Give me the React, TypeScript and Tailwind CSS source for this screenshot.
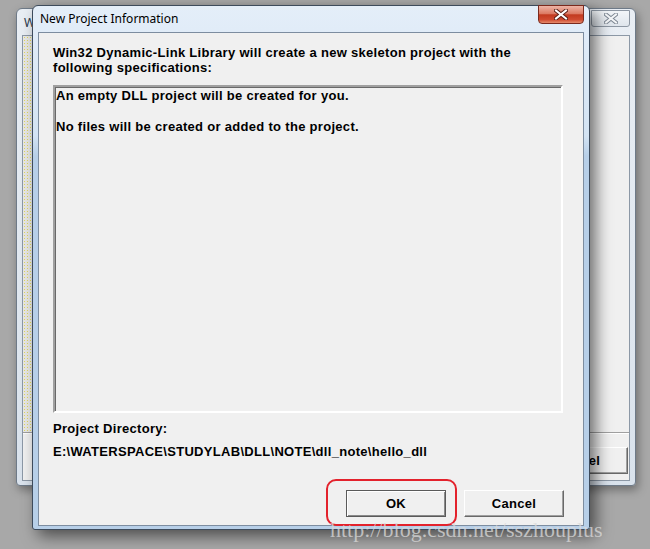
import React from "react";

const ui = "font-['Liberation_Sans','Arial',sans-serif]";

function CloseGlyph({ fill, stroke }: { fill: string; stroke: string }) {
  return (
    <svg width="14" height="11" viewBox="0 0 14 11">
      <path
        d="M2 1.5 L12 9.5 M12 1.5 L2 9.5"
        stroke={stroke}
        strokeWidth="4"
        strokeLinecap="square"
        fill="none"
      />
      <path
        d="M2 1.5 L12 9.5 M12 1.5 L2 9.5"
        stroke={fill}
        strokeWidth="2"
        strokeLinecap="square"
        fill="none"
      />
    </svg>
  );
}

function BackWindow() {
  return (
    <div className="absolute left-[16px] top-[8px] flex h-[478px] w-[620px] flex-col rounded-t-[6px] rounded-b-[4px] border border-[#6e7a88] bg-[linear-gradient(to_bottom,#e9eef4,#d9e2ec)] px-[5px] pb-[4px] shadow-[2px_4px_10px_rgba(0,0,0,0.35)]">
      <div className="flex h-[26px] items-start justify-between">
        <span className="pl-[2px] pt-[5px] font-['Noto_Sans',sans-serif] text-[12px] text-[#2a3a4c]">W</span>
        <div className="mt-[1px] flex h-[17px] w-[39px] items-center justify-center rounded-b-[3px] border border-[#8d97a3] bg-[linear-gradient(to_bottom,#f2f5f8,#dfe5ec)]">
          <CloseGlyph fill="#f4f6f8" stroke="#7d8793" />
        </div>
      </div>
      <div className="flex flex-1 flex-col border border-[#8c98a6] bg-[#f0f0f0]">
        <div className="flex flex-1">
          <div className="w-[9px] bg-[#e8e8e6] bg-[radial-gradient(#e0d860_0.6px,transparent_0.7px)] bg-[length:3px_3px]" />
        </div>
        <div className="border-t border-b border-t-[#a0a0a0] border-b-white" />
        <div className="flex justify-end pt-[13px] pb-[6px] pr-[1px]">
          <div
            className={`${ui} flex h-[27px] w-[100px] items-center justify-center border border-t-white border-l-white border-r-[#696969] border-b-[#696969] text-[13px] font-bold tracking-[0.3px] text-black shadow-[inset_-1px_-1px_0_#a0a0a0]`}
          >
            Cancel
          </div>
        </div>
      </div>
    </div>
  );
}

function FrontDialog() {
  return (
    <div className="absolute left-[32px] top-[5px] flex h-[525px] w-[558px] flex-col rounded-t-[6px] rounded-b-[3px] border border-[#3d4b5c] bg-[linear-gradient(to_bottom,#e4eef9_0px,#d3e3f3_130px,#b7cfe8_150px,#b7cfe8_100%)] px-[5px] pb-[3px] shadow-[6px_6px_16px_rgba(0,0,0,0.55)]">
      <div className="flex h-[26px] items-start justify-between">
        <span className="pl-[2px] pt-[4px] font-['Noto_Sans',sans-serif] text-[12px] text-black">
          New Project Information
        </span>
        <div className="-mt-[1px] flex h-[19px] w-[46px] items-center justify-center rounded-b-[4px] border border-[#7a2a1e] bg-[linear-gradient(to_bottom,#edb4a6_0%,#dc7a63_45%,#c23a20_52%,#cf4a30_80%,#e68b6c_100%)]">
          <CloseGlyph fill="#ffffff" stroke="#5a2016" />
        </div>
      </div>
      <div
        className={`${ui} flex flex-1 flex-col border border-[#7d8da0] bg-[#f0f0f0] pl-[14px] pr-[19px] pt-[12px] text-[13px] font-bold leading-[15px] tracking-[0.3px] text-black`}
      >
        <p>
          Win32 Dynamic-Link Library will create a new skeleton project with the
          <br />
          following specifications:
        </p>
        <div className="mt-[10px] h-[328px] w-[510px] border-2 border-t-[#a0a0a0] border-l-[#a0a0a0] border-r-white border-b-white bg-[#f0f0f0] pl-[1px] pt-[1px] shadow-[inset_1px_1px_0_#696969]">
          <p>An empty DLL project will be created for you.</p>
          <p className="mt-[16px]">No files will be created or added to the project.</p>
        </div>
        <p className="mt-[8px]">Project Directory:</p>
        <p className="mt-[8px]">{"E:\\WATERSPACE\\STUDYLAB\\DLL\\NOTE\\dll_note\\hello_dll"}</p>
        <div className="mt-auto flex justify-end gap-[18px] pb-[8px]">
          <div className="flex h-[27px] w-[100px] items-center justify-center border border-[#5a5a5a] shadow-[inset_1px_1px_0_#ffffff,inset_-1px_-1px_0_#8a8a8a]">
            OK
          </div>
          <div className="flex h-[27px] w-[100px] items-center justify-center border border-t-white border-l-white border-r-[#696969] border-b-[#696969] shadow-[inset_-1px_-1px_0_#a0a0a0]">
            Cancel
          </div>
        </div>
      </div>
    </div>
  );
}

export default function App() {
  return (
    <div className="relative h-[549px] w-[650px] overflow-hidden bg-[#a8a8a8]">
      <BackWindow />
      <FrontDialog />
      {/* annotation marks drawn over the screenshot */}
      <div className="absolute left-[326px] top-[479px] h-[47px] w-[131px] rounded-[10px] border-2 border-[#e3222c]" />
      <div className="absolute left-[330px] top-[513px] font-['Liberation_Serif',serif] text-[22px] text-[#dadada]/75">
        http://blog.csdn.net/sszhouplus
      </div>
    </div>
  );
}
